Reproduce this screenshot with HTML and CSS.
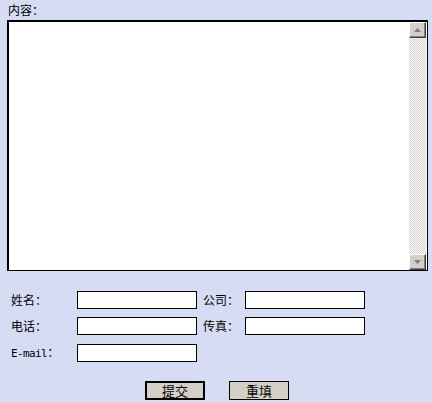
FILE: index.html
```html
<!DOCTYPE html>
<html lang="zh-CN">
<head>
  <meta charset="UTF-8">
  <meta name="viewport" content="width=device-width, initial-scale=1.0">
  <title>留言</title>
  <link rel="stylesheet" href="styles.css">
</head>
<body>

<form class="msg-form">
  <div class="field-title">内容：</div>

  <div class="content-box">
    <textarea class="content" autofocus></textarea>
    <div class="scrollbar">
      <div class="sb-btn">
        <svg width="7" height="4" viewBox="0 0 7 4"><polygon points="3.5,0 7,4 0,4" fill="#808080"/></svg>
      </div>
      <div class="sb-track"></div>
      <div class="sb-btn">
        <svg width="7" height="4" viewBox="0 0 7 4"><polygon points="0,0 7,0 3.5,4" fill="#808080"/></svg>
      </div>
    </div>
  </div>

  <div class="info-grid">
    <label>姓名：</label>
    <input type="text" class="txt">
    <label>公司：</label>
    <input type="text" class="txt">

    <label>电话：</label>
    <input type="text" class="txt">
    <label>传真：</label>
    <input type="text" class="txt">

    <label><span class="latin">E-mail</span>：</label>
    <input type="text" class="txt">
  </div>

  <div class="actions">
    <button type="submit" class="btn btn-default">提交</button>
    <button type="reset" class="btn">重填</button>
  </div>
</form>

</body>
</html>
```

FILE: styles.css
```css
body {
  margin: 0;
  background: #d6dcf4;
  font-family: "Noto Sans CJK SC", "Liberation Mono", monospace;
  font-size: 12px;
  color: #000;
}

.msg-form {
  padding: 3px 0 0 0;
}

.field-title {
  height: 17px;
  line-height: 14px;
  padding-left: 8px;
}

.content-box {
  display: flex;
  margin-left: 7px;
  width: 421px;
  height: 251px;
  box-sizing: border-box;
  border-style: solid;
  border-color: #000;
  border-width: 2px 1px 1px 2px;
  background: #fff;
}

.content {
  flex: 1;
  border: none;
  outline: none;
  resize: none;
  margin: 0;
  padding: 2px;
  font-family: inherit;
  font-size: 12px;
  background: #fff;
  caret-color: #000;
}

.scrollbar {
  width: 17px;
  display: flex;
  flex-direction: column;
  padding: 0 1px 0 0;
}

.sb-btn {
  height: 16px;
  box-sizing: border-box;
  background: #d4d0c8;
  border-style: solid;
  border-width: 1px;
  border-color: #fff #404040 #404040 #fff;
  box-shadow: inset -1px -1px 0 #808080;
  display: flex;
  align-items: center;
  justify-content: center;
}

.sb-track {
  flex: 1;
  background-color: #ffffff;
  background-image:
    linear-gradient(45deg, #d4d0c8 25%, transparent 25%, transparent 75%, #d4d0c8 75%),
    linear-gradient(45deg, #d4d0c8 25%, transparent 25%, transparent 75%, #d4d0c8 75%);
  background-size: 2px 2px;
  background-position: 0 0, 1px 1px;
}

.info-grid {
  display: grid;
  grid-template-columns: 60px 120px 36px 120px;
  column-gap: 6px;
  row-gap: 8px;
  margin: 20px 0 0 11px;
  align-items: center;
}

.info-grid label {
  line-height: 18px;
  white-space: nowrap;
}

.latin {
  font-family: "DejaVu Sans Mono", "Liberation Mono", monospace;
  font-size: 11px;
  letter-spacing: -0.6px;
}

.txt {
  width: 120px;
  height: 18px;
  box-sizing: border-box;
  border: 1px solid #000;
  background: #fff;
  margin: 0;
  padding: 0 2px;
  font-size: 12px;
}

.actions {
  display: flex;
  justify-content: center;
  gap: 24px;
  margin: 18px 0 0 0;
  padding-left: 2px;
}

.btn {
  width: 60px;
  height: 19px;
  box-sizing: border-box;
  margin: 0;
  padding: 0;
  background: #d4d0c8;
  border: 1px solid #000;
  font-family: inherit;
  font-size: 13px;
  line-height: 15px;
  color: #000;
}

.btn-default {
  border-width: 2px;
}
```
